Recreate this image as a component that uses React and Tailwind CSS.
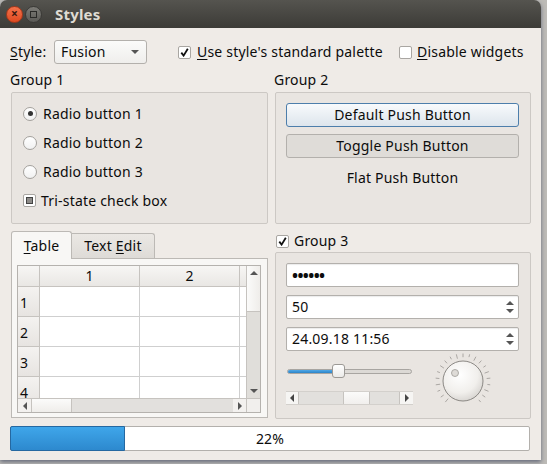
import React from "react";

function CheckBox({ checked }) {
  return (
    <span className="inline-flex shrink-0 w-[13px] h-[13px] items-center justify-center bg-white border border-[#a9a6a2] rounded-[2px]">
      {checked && (
        <svg width="9" height="9" viewBox="0 0 9 9">
          <path d="M1.3 4.6 L3.6 7.6 L7.8 0.8" stroke="#111" strokeWidth="1.8" fill="none" />
        </svg>
      )}
    </span>
  );
}

function Radio({ checked }) {
  return (
    <span className="inline-flex shrink-0 w-[14px] h-[14px] rounded-full border border-[#a4a19d] bg-gradient-to-b from-white to-[#f1f1f1] items-center justify-center">
      {checked && <span className="w-[5px] h-[5px] rounded-full bg-[#333]" />}
    </span>
  );
}

function Tri({ dir, size = 4, color = "#3c3c3c" }) {
  const d = {
    up: `M0 ${size} L${size} 0 L${size * 2} ${size} Z`,
    down: `M0 0 L${size} ${size} L${size * 2} 0 Z`,
    left: `M${size} 0 L0 ${size} L${size} ${size * 2} Z`,
    right: `M0 0 L${size} ${size} L0 ${size * 2} Z`,
  }[dir];
  const horiz = dir === "up" || dir === "down";
  return (
    <svg width={horiz ? size * 2 : size} height={horiz ? size : size * 2}>
      <path d={d} fill={color} />
    </svg>
  );
}

function Field({ children, spin }) {
  return (
    <div className="flex w-[233px] h-[24px] bg-white border border-[#b3b0ac] rounded-[2px] shadow-[inset_0_1px_1px_rgba(0,0,0,0.08)]">
      <div className="flex-1 flex items-center pl-[5px]">{children}</div>
      {spin && (
        <div className="w-[16px] flex flex-col items-center justify-center gap-[4px]">
          <Tri dir="up" size={4} color="#555" />
          <Tri dir="down" size={4} color="#555" />
        </div>
      )}
    </div>
  );
}

function Dial() {
  const ticks = [];
  for (let i = 0; i <= 20; i++) {
    const a = ((-140 + i * 14) * Math.PI) / 180;
    const r1 = 23 + (i % 3) * 0.8;
    const r2 = 27.5;
    ticks.push(
      <line
        key={i}
        x1={30 + r1 * Math.sin(a)}
        y1={30 - r1 * Math.cos(a)}
        x2={30 + r2 * Math.sin(a)}
        y2={30 - r2 * Math.cos(a)}
        stroke="#9a9793"
        strokeWidth="0.8"
      />
    );
  }
  return (
    <svg width="60" height="60" viewBox="0 0 60 60">
      <defs>
        <radialGradient id="dialg" cx="0.42" cy="0.35" r="0.75">
          <stop offset="0" stopColor="#ffffff" />
          <stop offset="0.6" stopColor="#f1efec" />
          <stop offset="1" stopColor="#cfccc8" />
        </radialGradient>
      </defs>
      {ticks}
      <circle cx="30" cy="30" r="20" fill="url(#dialg)" stroke="#8b8884" strokeWidth="1" />
      <circle cx="22" cy="22" r="3.5" fill="#dedbd7" stroke="#9d9a96" strokeWidth="0.8" />
    </svg>
  );
}

export default function App() {
  const rows = ["1", "2", "3", "4"];
  return (
    <div className="w-[547px] h-[464px] bg-[#bdbbb7] font-['Noto_Sans',sans-serif] text-[14px] tracking-[0.2px] text-[#0c0c0c] leading-none overflow-hidden">
      <div className="w-[541px] h-[460px] rounded-t-[7px] overflow-hidden flex flex-col shadow-[0_2px_4px_rgba(40,50,80,0.6)]">
        {/* title bar */}
        <div className="h-[28px] shrink-0 flex items-center bg-gradient-to-b from-[#55544f] to-[#3c3b37]">
          <div className="ml-[6px] w-[17px] h-[17px] rounded-full bg-gradient-to-b from-[#f4714a] to-[#de4a1f] border border-[#a8381a] flex items-center justify-center text-[#3a1a10] text-[12px] font-bold">
            ×
          </div>
          <div className="ml-[2px] w-[17px] h-[17px] rounded-full bg-gradient-to-b from-[#7d7c77] to-[#5b5a56] border border-[#3b3a37] flex items-center justify-center">
            <span className="w-[7px] h-[7px] border border-[#2a2a28]" />
          </div>
          <span className="ml-[13px] text-[15px] font-bold text-[#dfdbd2]">Styles</span>
        </div>

        {/* body */}
        <div className="flex-1 bg-[#efebe7] pl-[10px] pt-[12px] flex flex-col">
          {/* top row */}
          <div className="flex items-center h-[24px]">
            <span className="w-[44px]">
              <span className="underline underline-offset-2">S</span>tyle:
            </span>
            <div className="w-[93px] h-[24px] flex items-center justify-between pl-[6px] pr-[7px] border border-[#b3b0ac] rounded-[3px] bg-gradient-to-b from-[#fbfbfa] to-[#efeeec]">
              <span>Fusion</span>
              <Tri dir="down" size={4} color="#555" />
            </div>
            <div className="ml-[31px] w-[221px] flex items-center gap-[6px]">
              <CheckBox checked />
              <span>
                <span className="underline underline-offset-2">U</span>se style's standard palette
              </span>
            </div>
            <div className="flex items-center gap-[5px]">
              <CheckBox />
              <span>
                <span className="underline underline-offset-2">D</span>isable widgets
              </span>
            </div>
          </div>

          {/* groups 1 & 2 */}
          <div className="grid grid-cols-[258px_257px] gap-x-[6px] mt-[8px]">
            <div>
              <div className="h-[16px] flex items-center">Group 1</div>
              <div className="ml-[1px] mt-[4px] w-[257px] h-[132px] border border-[#ccc8c4] rounded-[2px] bg-[#e9e5e1] pl-[11px] pt-[6px]">
                {["Radio button 1", "Radio button 2", "Radio button 3"].map((t, i) => (
                  <div key={t} className="h-[29px] flex items-center gap-[6px]">
                    <Radio checked={i === 0} />
                    <span>{t}</span>
                  </div>
                ))}
                <div className="h-[29px] flex items-center gap-[5px]">
                  <span className="inline-flex w-[13px] h-[13px] items-center justify-center bg-white border border-[#a9a6a2] rounded-[2px]">
                    <span className="w-[7px] h-[7px] bg-[#8d8b88] border border-[#444]" />
                  </span>
                  <span>Tri-state check box</span>
                </div>
              </div>
            </div>
            <div>
              <div className="h-[16px] flex items-center">Group 2</div>
              <div className="ml-[1px] mt-[4px] w-[256px] h-[132px] border border-[#ccc8c4] rounded-[2px] bg-[#e9e5e1] pl-[10px] pt-[10px] flex flex-col">
                <div className="w-[233px] h-[24px] flex items-center justify-center rounded-[3px] border border-[#4d7eab] bg-gradient-to-b from-[#f8fafc] to-[#dde5ec]">
                  Default Push Button
                </div>
                <div className="mt-[7px] w-[233px] h-[24px] flex items-center justify-center rounded-[3px] border border-[#b3b0ac] bg-[#dfdcd8]">
                  Toggle Push Button
                </div>
                <div className="mt-[8px] w-[233px] h-[24px] flex items-center justify-center">Flat Push Button</div>
              </div>
            </div>
          </div>

          {/* tabs & group 3 */}
          <div className="grid grid-cols-[258px_257px] gap-x-[6px] mt-[7px]">
            <div className="ml-[1px] flex flex-col">
              <div className="h-[27px] flex items-end">
                <div className="relative z-10 -mb-px w-[61px] h-[28px] flex items-center justify-center border border-b-0 border-[#bcb9b5] rounded-t-[3px] bg-[#f8f7f5]">
                  <span>
                    <span className="underline underline-offset-2">T</span>able
                  </span>
                </div>
                <div className="w-[83px] h-[25px] flex items-center justify-center border border-l-0 border-b-0 border-[#bcb9b5] rounded-tr-[3px] bg-gradient-to-b from-[#ebe8e4] to-[#dedbd7]">
                  <span>
                    Text <span className="underline underline-offset-2">E</span>dit
                  </span>
                </div>
              </div>
              <div className="w-[257px] h-[160px] border border-[#bcb9b5] bg-[#f8f7f5] pl-[5px] pt-[6px]">
                <div className="w-[244px] h-[148px] border border-[#b5b2ae] bg-white flex flex-col">
                  <div className="flex h-[132px]">
                    <div className="w-[228px] overflow-hidden flex flex-col">
                      <div className="flex h-[21px] shrink-0 bg-gradient-to-b from-[#f7f6f4] to-[#e9e7e4] border-b border-[#c6c3bf]">
                        <div className="w-[22px] shrink-0 border-r border-[#c6c3bf]" />
                        <div className="w-[100px] shrink-0 border-r border-[#c6c3bf] flex items-center justify-center">1</div>
                        <div className="w-[100px] shrink-0 border-r border-[#c6c3bf] flex items-center justify-center">2</div>
                        <div className="w-[8px] shrink-0" />
                      </div>
                      {rows.map((r) => (
                        <div key={r} className="flex h-[30px] shrink-0">
                          <div className="w-[22px] shrink-0 border-r border-b border-[#c6c3bf] bg-gradient-to-b from-[#f4f2f0] to-[#e7e4e1] flex items-center pl-[2px] pt-[3px]">
                            {r}
                          </div>
                          <div className="w-[100px] shrink-0 border-r border-b border-[#cfcfcf]" />
                          <div className="w-[100px] shrink-0 border-r border-b border-[#cfcfcf]" />
                          <div className="w-[8px] shrink-0 border-b border-[#cfcfcf]" />
                        </div>
                      ))}
                    </div>
                    <div className="w-[14px] border-l border-[#c6c3bf] flex flex-col bg-[#e0deda]">
                      <div className="h-[46px] bg-gradient-to-r from-[#fbfbfa] to-[#efedea] border-b border-[#c6c3bf] flex justify-center pt-[5px]">
                        <Tri dir="up" size={4} color="#555" />
                      </div>
                      <div className="flex-1" />
                      <div className="h-[14px] flex justify-center items-center">
                        <Tri dir="down" size={4} color="#555" />
                      </div>
                    </div>
                  </div>
                  <div className="flex h-[14px] border-t border-[#c6c3bf]">
                    <div className="w-[228px] flex bg-[#e2e0dd]">
                      <div className="w-[13px] flex items-center justify-center bg-[#f3f1ef]">
                        <Tri dir="left" size={4} color="#555" />
                      </div>
                      <div className="w-[41px] bg-gradient-to-b from-[#fbfbfa] to-[#efedea] border-x border-[#c6c3bf]" />
                      <div className="flex-1" />
                      <div className="w-[13px] flex items-center justify-center bg-[#f3f1ef]">
                        <Tri dir="right" size={4} color="#555" />
                      </div>
                    </div>
                    <div className="w-[14px] border-l border-[#c6c3bf] bg-[#f1efed]" />
                  </div>
                </div>
              </div>
            </div>

            <div>
              <div className="h-[18px] flex items-center gap-[5px] ml-[2px] pt-[2px]">
                <CheckBox checked />
                <span>Group 3</span>
              </div>
              <div className="ml-[1px] mt-[3px] w-[256px] h-[167px] border border-[#ccc8c4] rounded-[2px] bg-[#e9e5e1] pl-[10px] pt-[10px] flex flex-col gap-[8px]">
                <Field>
                  <span className="text-[16px] font-bold tracking-[-0.6px]">••••••</span>
                </Field>
                <Field spin>50</Field>
                <Field spin>24.09.18 11:56</Field>
                <div className="flex -mt-[8px]">
                  <div className="w-[127px] flex flex-col">
                    <div className="mt-[13px] h-[14px] relative flex items-center">
                      <div className="ml-[1px] w-[125px] h-[5px] rounded-full border border-[#a8a5a1] bg-[#dcd9d5] overflow-hidden">
                        <div className="w-[45px] h-full bg-gradient-to-b from-[#4fa8e8] to-[#2d84c7]" />
                      </div>
                      <div className="absolute left-[46px] top-0 w-[13px] h-[14px] rounded-[3px] border border-[#9c9995] bg-gradient-to-b from-white to-[#ecebe9]" />
                    </div>
                    <div className="mt-[13px] h-[14px] flex bg-[#e2e0dd] border-y border-[#d3d0cc]">
                      <div className="w-[13px] flex items-center justify-center bg-[#f6f5f3] border-r border-[#c6c3bf]">
                        <Tri dir="left" size={4} color="#444" />
                      </div>
                      <div className="w-[44px]" />
                      <div className="w-[27px] bg-gradient-to-b from-[#fbfbfa] to-[#f1efed] border-x border-[#c6c3bf]" />
                      <div className="flex-1" />
                      <div className="w-[14px] flex items-center justify-center bg-[#f6f5f3] border-l border-[#c6c3bf]">
                        <Tri dir="right" size={4} color="#444" />
                      </div>
                    </div>
                  </div>
                  <div className="ml-[20px]">
                    <Dial />
                  </div>
                </div>
              </div>
            </div>
          </div>

          {/* progress */}
          <div className="mt-[7px] w-[520px] h-[25px] border border-[#b3b0ac] rounded-[2px] bg-white flex relative">
            <div className="w-[115px] -m-px h-[25px] rounded-l-[2px] border border-[#2568a1] bg-gradient-to-b from-[#3fa6ea] to-[#2d89ce]" />
            <span className="absolute inset-0 flex items-center justify-center">22%</span>
          </div>
        </div>
      </div>
    </div>
  );
}
